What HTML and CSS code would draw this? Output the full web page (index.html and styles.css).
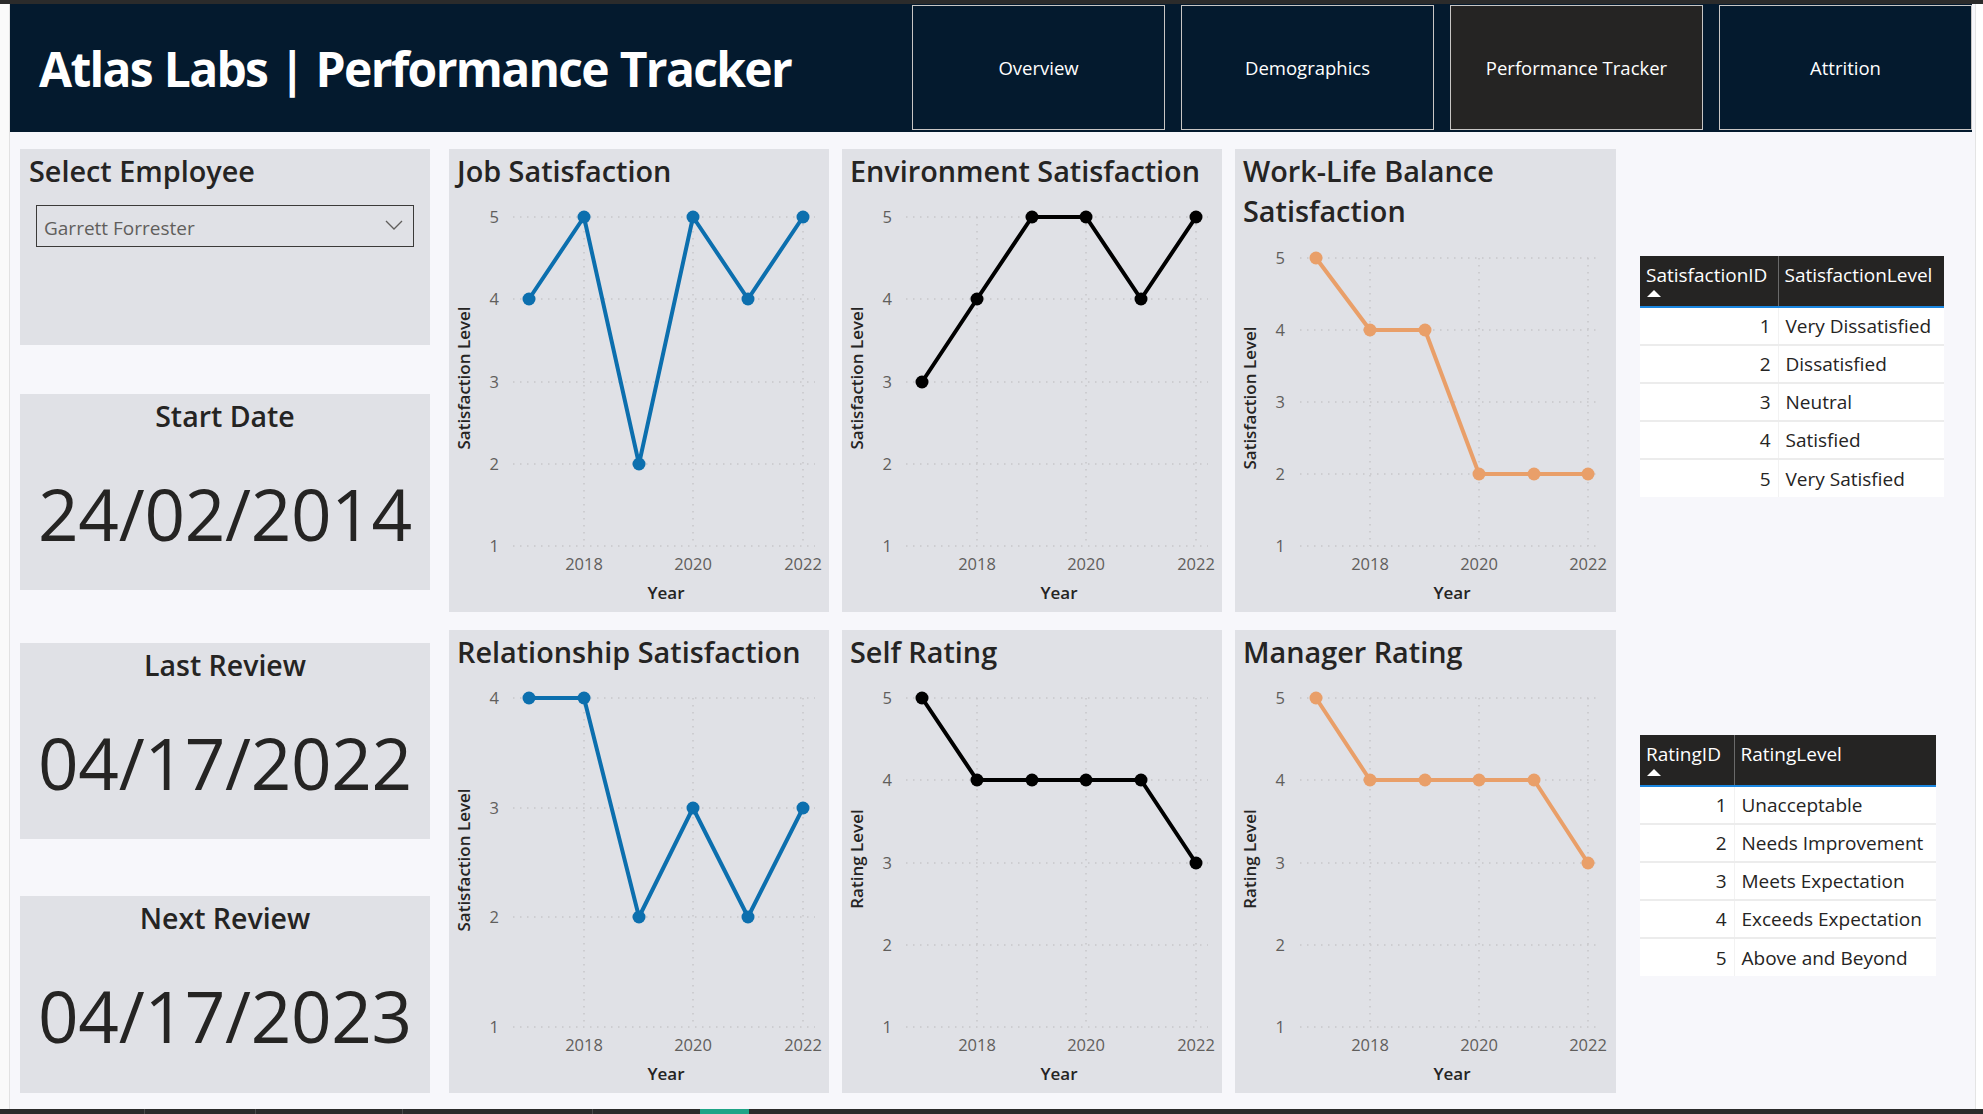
FILE: index.html
```html
<!DOCTYPE html>
<html lang="en">
<head>
<meta charset="utf-8">
<title>Atlas Labs | Performance Tracker</title>
<link rel="stylesheet" href="styles.css">
</head>
<body>
<div class="app">
  <div class="topbar"></div>
  <div class="main">
    <div class="edge-left"></div>
    <div class="canvas">
      <header class="header">
        <h1 class="brand">Atlas Labs | Performance Tracker</h1>
        <nav class="nav">
          <a class="nav-btn">Overview</a>
          <a class="nav-btn">Demographics</a>
          <a class="nav-btn active">Performance Tracker</a>
          <a class="nav-btn">Attrition</a>
        </nav>
      </header>

      <div class="content">
        <div class="left-col">
          <section class="card select-card">
            <h2 class="card-title">Select Employee</h2>
            <div class="dropdown">
              <span class="dropdown-text">Garrett Forrester</span>
              <svg class="chevron" width="18" height="10" viewBox="0 0 18 10"><polyline points="1,1 9,9 17,1" fill="none" stroke="#605e5c" stroke-width="1.3"/></svg>
            </div>
          </section>
          <section class="card kpi kpi-start">
            <div class="kpi-label">Start Date</div>
            <div class="kpi-value">24/02/2014</div>
          </section>
          <section class="card kpi kpi-last">
            <div class="kpi-label">Last Review</div>
            <div class="kpi-value">04/17/2022</div>
          </section>
          <section class="card kpi kpi-next">
            <div class="kpi-label">Next Review</div>
            <div class="kpi-value">04/17/2023</div>
          </section>
        </div>

        <div class="charts">
          <!-- Job Satisfaction -->
          <section class="card chart-card">
            <h2 class="card-title chart-title">Job Satisfaction</h2>
            <svg class="chart-svg" width="380" height="413" viewBox="0 0 380 413">
              <g class="grid">
                <line x1="64" y1="18" x2="366" y2="18"/><line x1="64" y1="100" x2="366" y2="100"/><line x1="64" y1="183" x2="366" y2="183"/><line x1="64" y1="265" x2="366" y2="265"/><line x1="64" y1="347" x2="366" y2="347"/>
                <line x1="135" y1="18" x2="135" y2="347"/><line x1="244" y1="18" x2="244" y2="347"/><line x1="354" y1="18" x2="354" y2="347"/>
              </g>
              <g class="tick">
                <text x="50" y="24" text-anchor="end">5</text><text x="50" y="106" text-anchor="end">4</text><text x="50" y="189" text-anchor="end">3</text><text x="50" y="271" text-anchor="end">2</text><text x="50" y="353" text-anchor="end">1</text>
                <text x="135" y="371" text-anchor="middle">2018</text><text x="244" y="371" text-anchor="middle">2020</text><text x="354" y="371" text-anchor="middle">2022</text>
              </g>
              <text class="axis-title" x="217" y="400" text-anchor="middle">Year</text>
              <text class="axis-title" transform="translate(21 179) rotate(-90)" text-anchor="middle">Satisfaction Level</text>
              <g class="series s-blue">
                <polyline points="80,100 135,18 190,265 244,18 299,100 354,18"/>
                <circle cx="80" cy="100" r="6.5"/><circle cx="135" cy="18" r="6.5"/><circle cx="190" cy="265" r="6.5"/><circle cx="244" cy="18" r="6.5"/><circle cx="299" cy="100" r="6.5"/><circle cx="354" cy="18" r="6.5"/>
              </g>
            </svg>
          </section>

          <!-- Environment Satisfaction -->
          <section class="card chart-card">
            <h2 class="card-title chart-title">Environment Satisfaction</h2>
            <svg class="chart-svg" width="380" height="413" viewBox="0 0 380 413">
              <g class="grid">
                <line x1="64" y1="18" x2="366" y2="18"/><line x1="64" y1="100" x2="366" y2="100"/><line x1="64" y1="183" x2="366" y2="183"/><line x1="64" y1="265" x2="366" y2="265"/><line x1="64" y1="347" x2="366" y2="347"/>
                <line x1="135" y1="18" x2="135" y2="347"/><line x1="244" y1="18" x2="244" y2="347"/><line x1="354" y1="18" x2="354" y2="347"/>
              </g>
              <g class="tick">
                <text x="50" y="24" text-anchor="end">5</text><text x="50" y="106" text-anchor="end">4</text><text x="50" y="189" text-anchor="end">3</text><text x="50" y="271" text-anchor="end">2</text><text x="50" y="353" text-anchor="end">1</text>
                <text x="135" y="371" text-anchor="middle">2018</text><text x="244" y="371" text-anchor="middle">2020</text><text x="354" y="371" text-anchor="middle">2022</text>
              </g>
              <text class="axis-title" x="217" y="400" text-anchor="middle">Year</text>
              <text class="axis-title" transform="translate(21 179) rotate(-90)" text-anchor="middle">Satisfaction Level</text>
              <g class="series s-black">
                <polyline points="80,183 135,100 190,18 244,18 299,100 354,18"/>
                <circle cx="80" cy="183" r="6.5"/><circle cx="135" cy="100" r="6.5"/><circle cx="190" cy="18" r="6.5"/><circle cx="244" cy="18" r="6.5"/><circle cx="299" cy="100" r="6.5"/><circle cx="354" cy="18" r="6.5"/>
              </g>
            </svg>
          </section>

          <!-- Work-Life Balance Satisfaction -->
          <section class="card chart-card">
            <h2 class="card-title chart-title">Work-Life Balance<br>Satisfaction</h2>
            <svg class="chart-svg" width="381" height="373" viewBox="0 0 381 373">
              <g class="grid">
                <line x1="65" y1="19" x2="365" y2="19"/><line x1="65" y1="91" x2="365" y2="91"/><line x1="65" y1="163" x2="365" y2="163"/><line x1="65" y1="235" x2="365" y2="235"/><line x1="65" y1="307" x2="365" y2="307"/>
                <line x1="135" y1="19" x2="135" y2="307"/><line x1="244" y1="19" x2="244" y2="307"/><line x1="353" y1="19" x2="353" y2="307"/>
              </g>
              <g class="tick">
                <text x="50" y="25" text-anchor="end">5</text><text x="50" y="97" text-anchor="end">4</text><text x="50" y="169" text-anchor="end">3</text><text x="50" y="241" text-anchor="end">2</text><text x="50" y="313" text-anchor="end">1</text>
                <text x="135" y="331" text-anchor="middle">2018</text><text x="244" y="331" text-anchor="middle">2020</text><text x="353" y="331" text-anchor="middle">2022</text>
              </g>
              <text class="axis-title" x="217" y="360" text-anchor="middle">Year</text>
              <text class="axis-title" transform="translate(21 159) rotate(-90)" text-anchor="middle">Satisfaction Level</text>
              <g class="series s-orange">
                <polyline points="81,19 135,91 190,91 244,235 299,235 353,235"/>
                <circle cx="81" cy="19" r="6.5"/><circle cx="135" cy="91" r="6.5"/><circle cx="190" cy="91" r="6.5"/><circle cx="244" cy="235" r="6.5"/><circle cx="299" cy="235" r="6.5"/><circle cx="353" cy="235" r="6.5"/>
              </g>
            </svg>
          </section>

          <!-- Relationship Satisfaction -->
          <section class="card chart-card">
            <h2 class="card-title chart-title">Relationship Satisfaction</h2>
            <svg class="chart-svg" width="380" height="413" viewBox="0 0 380 413">
              <g class="grid">
                <line x1="64" y1="18" x2="366" y2="18"/><line x1="64" y1="128" x2="366" y2="128"/><line x1="64" y1="237" x2="366" y2="237"/><line x1="64" y1="347" x2="366" y2="347"/>
                <line x1="135" y1="18" x2="135" y2="347"/><line x1="244" y1="18" x2="244" y2="347"/><line x1="354" y1="18" x2="354" y2="347"/>
              </g>
              <g class="tick">
                <text x="50" y="24" text-anchor="end">4</text><text x="50" y="134" text-anchor="end">3</text><text x="50" y="243" text-anchor="end">2</text><text x="50" y="353" text-anchor="end">1</text>
                <text x="135" y="371" text-anchor="middle">2018</text><text x="244" y="371" text-anchor="middle">2020</text><text x="354" y="371" text-anchor="middle">2022</text>
              </g>
              <text class="axis-title" x="217" y="400" text-anchor="middle">Year</text>
              <text class="axis-title" transform="translate(21 180) rotate(-90)" text-anchor="middle">Satisfaction Level</text>
              <g class="series s-blue">
                <polyline points="80,18 135,18 190,237 244,128 299,237 354,128"/>
                <circle cx="80" cy="18" r="6.5"/><circle cx="135" cy="18" r="6.5"/><circle cx="190" cy="237" r="6.5"/><circle cx="244" cy="128" r="6.5"/><circle cx="299" cy="237" r="6.5"/><circle cx="354" cy="128" r="6.5"/>
              </g>
            </svg>
          </section>

          <!-- Self Rating -->
          <section class="card chart-card">
            <h2 class="card-title chart-title">Self Rating</h2>
            <svg class="chart-svg" width="380" height="413" viewBox="0 0 380 413">
              <g class="grid">
                <line x1="64" y1="18" x2="366" y2="18"/><line x1="64" y1="100" x2="366" y2="100"/><line x1="64" y1="183" x2="366" y2="183"/><line x1="64" y1="265" x2="366" y2="265"/><line x1="64" y1="347" x2="366" y2="347"/>
                <line x1="135" y1="18" x2="135" y2="347"/><line x1="244" y1="18" x2="244" y2="347"/><line x1="354" y1="18" x2="354" y2="347"/>
              </g>
              <g class="tick">
                <text x="50" y="24" text-anchor="end">5</text><text x="50" y="106" text-anchor="end">4</text><text x="50" y="189" text-anchor="end">3</text><text x="50" y="271" text-anchor="end">2</text><text x="50" y="353" text-anchor="end">1</text>
                <text x="135" y="371" text-anchor="middle">2018</text><text x="244" y="371" text-anchor="middle">2020</text><text x="354" y="371" text-anchor="middle">2022</text>
              </g>
              <text class="axis-title" x="217" y="400" text-anchor="middle">Year</text>
              <text class="axis-title" transform="translate(21 179) rotate(-90)" text-anchor="middle">Rating Level</text>
              <g class="series s-black">
                <polyline points="80,18 135,100 190,100 244,100 299,100 354,183"/>
                <circle cx="80" cy="18" r="6.5"/><circle cx="135" cy="100" r="6.5"/><circle cx="190" cy="100" r="6.5"/><circle cx="244" cy="100" r="6.5"/><circle cx="299" cy="100" r="6.5"/><circle cx="354" cy="183" r="6.5"/>
              </g>
            </svg>
          </section>

          <!-- Manager Rating -->
          <section class="card chart-card">
            <h2 class="card-title chart-title">Manager Rating</h2>
            <svg class="chart-svg" width="381" height="413" viewBox="0 0 381 413">
              <g class="grid">
                <line x1="65" y1="18" x2="365" y2="18"/><line x1="65" y1="100" x2="365" y2="100"/><line x1="65" y1="183" x2="365" y2="183"/><line x1="65" y1="265" x2="365" y2="265"/><line x1="65" y1="347" x2="365" y2="347"/>
                <line x1="135" y1="18" x2="135" y2="347"/><line x1="244" y1="18" x2="244" y2="347"/><line x1="353" y1="18" x2="353" y2="347"/>
              </g>
              <g class="tick">
                <text x="50" y="24" text-anchor="end">5</text><text x="50" y="106" text-anchor="end">4</text><text x="50" y="189" text-anchor="end">3</text><text x="50" y="271" text-anchor="end">2</text><text x="50" y="353" text-anchor="end">1</text>
                <text x="135" y="371" text-anchor="middle">2018</text><text x="244" y="371" text-anchor="middle">2020</text><text x="353" y="371" text-anchor="middle">2022</text>
              </g>
              <text class="axis-title" x="217" y="400" text-anchor="middle">Year</text>
              <text class="axis-title" transform="translate(21 179) rotate(-90)" text-anchor="middle">Rating Level</text>
              <g class="series s-orange">
                <polyline points="81,18 135,100 190,100 244,100 299,100 353,183"/>
                <circle cx="81" cy="18" r="6.5"/><circle cx="135" cy="100" r="6.5"/><circle cx="190" cy="100" r="6.5"/><circle cx="244" cy="100" r="6.5"/><circle cx="299" cy="100" r="6.5"/><circle cx="353" cy="183" r="6.5"/>
              </g>
            </svg>
          </section>
        </div>

        <div class="tables">
          <table class="ref-table t-sat">
            <colgroup><col class="c-id"><col class="c-level"></colgroup>
            <thead>
              <tr><th>SatisfactionID<span class="sort"></span></th><th>SatisfactionLevel</th></tr>
            </thead>
            <tbody>
              <tr><td class="id">1</td><td>Very Dissatisfied</td></tr>
              <tr><td class="id">2</td><td>Dissatisfied</td></tr>
              <tr><td class="id">3</td><td>Neutral</td></tr>
              <tr><td class="id">4</td><td>Satisfied</td></tr>
              <tr><td class="id">5</td><td>Very Satisfied</td></tr>
            </tbody>
          </table>

          <table class="ref-table t-rating">
            <colgroup><col class="c-id"><col class="c-level"></colgroup>
            <thead>
              <tr><th>RatingID<span class="sort"></span></th><th>RatingLevel</th></tr>
            </thead>
            <tbody>
              <tr><td class="id">1</td><td>Unacceptable</td></tr>
              <tr><td class="id">2</td><td>Needs Improvement</td></tr>
              <tr><td class="id">3</td><td>Meets Expectation</td></tr>
              <tr><td class="id">4</td><td>Exceeds Expectation</td></tr>
              <tr><td class="id">5</td><td>Above and Beyond</td></tr>
            </tbody>
          </table>
        </div>
      </div>
    </div>
    <div class="edge-right"></div>
  </div>
  <div class="bottombar">
    <span class="seg seg-1"></span><span class="seg seg-2"></span><span class="seg seg-3"></span><span class="seg seg-4"></span><span class="seg seg-5"></span><span class="seg seg-active"></span>
  </div>
</div>
</body>
</html>
```

FILE: styles.css
```css
* { box-sizing: border-box; }
html, body { margin: 0; padding: 0; }
body {
  width: 1983px;
  height: 1114px;
  overflow: hidden;
  background: #ffffff;
  font-family: "Segoe UI", "Open Sans", "Noto Sans", sans-serif;
  color: #252423;
}

.app { display: flex; flex-direction: column; height: 1114px; }
.topbar { height: 4px; flex: none; background: #2b2b2b; }
.main { flex: 1; display: flex; min-height: 0; }
.edge-left { width: 10px; flex: none; background: #fafafa; border-right: 1px solid #e2e2e2; }
.canvas { width: 1965px; flex: none; background: #f7f7fb; display: flex; flex-direction: column; }
.edge-right { flex: 1; background: #ffffff; border-left: 1px solid #e4e4e4; }

.bottombar { height: 5px; flex: none; display: flex; background: #2b2b2b; }
.seg { height: 5px; border-right: 1px solid #4a4a4a; }
.seg-1 { width: 145px; }
.seg-2 { width: 111px; }
.seg-3 { width: 147px; }
.seg-4 { width: 190px; }
.seg-5 { width: 107px; border-right: none; }
.seg-active { width: 49px; background: #20a487; border-right: none; }

/* Header */
.header {
  height: 128px;
  flex: none;
  margin-right: 3px;
  background: #041a2e;
  display: flex;
  align-items: flex-start;
}
.brand {
  margin: 0;
  padding: 4px 0 0 29px;
  font-size: 48px;
  font-weight: 700;
  line-height: 122px;
  color: #ffffff;
  white-space: nowrap;
  letter-spacing: -1.7px;
  word-spacing: 1px;
}
.nav { margin-left: auto; display: flex; gap: 16px; padding-top: 1px; }
.nav-btn {
  width: 253px;
  height: 125px;
  display: flex;
  align-items: center;
  justify-content: center;
  border: 1px solid #c8c6c4;
  background: #041a2e;
  color: #ffffff;
  font-size: 18.5px;
  text-decoration: none;
}
.nav-btn.active { background: #252423; }

/* Content */
.content { flex: 1; display: flex; align-items: flex-start; padding: 17px 0 0 10px; }
.card { background: #e0e1e6; }

.left-col { width: 410px; flex: none; display: flex; flex-direction: column; margin-right: 19px; }
.card-title { margin: 0; font-size: 28.8px; font-weight: 600; line-height: 40px; color: #252423; }

.select-card { height: 196px; padding: 2px 0 0 9px; }
.dropdown {
  margin: 14px 0 0 7px;
  width: 378px;
  height: 42px;
  border: 1px solid #3b3a39;
  display: flex;
  align-items: center;
  justify-content: space-between;
  padding: 3px 10px 0 7px;
}
.dropdown-text { font-size: 19px; color: #605e5c; }
.chevron { display: block; margin-top: -6px; }

.kpi { height: 196px; padding-top: 2px; text-align: center; }
.kpi-label { font-size: 28.5px; font-weight: 600; line-height: 40px; }
.kpi-value { font-size: 71px; font-weight: 500; line-height: 90px; margin-top: 33px; letter-spacing: -0.3px; }
.kpi-start { margin-top: 49px; }
.kpi-last { margin-top: 53px; }
.kpi-next { margin-top: 57px; height: 197px; }

/* Charts */
.charts {
  flex: none;
  display: grid;
  grid-template-columns: 380px 380px 381px;
  grid-template-rows: 463px 463px;
  column-gap: 13px;
  row-gap: 18px;
}
.chart-card { display: flex; flex-direction: column; padding-top: 2px; }
.chart-title { padding-left: 8px; margin-bottom: 8px; white-space: nowrap; }
.chart-svg { display: block; flex: none; overflow: visible; }
.grid line { stroke: #c6c6ca; stroke-width: 1.5; stroke-dasharray: 1.5 5.5; }
.tick text { font-size: 16.5px; fill: #605e5c; }
.axis-title { font-size: 17px; font-weight: 600; fill: #252423; }
.series polyline { fill: none; stroke-width: 4; stroke-linejoin: round; stroke-linecap: round; }
.s-blue polyline { stroke: #0c6fae; }
.s-blue circle { fill: #0c6fae; }
.s-black polyline { stroke: #000000; }
.s-black circle { fill: #000000; }
.s-orange polyline { stroke: #e99f69; }
.s-orange circle { fill: #e99f69; }

/* Tables */
.tables { flex: none; display: flex; flex-direction: column; margin-left: 24px; }
.ref-table { border-collapse: collapse; table-layout: fixed; font-size: 19px; }
.t-sat { width: 304px; margin-top: 107px; }
.t-rating { width: 296px; margin-top: 238px; }
.t-sat .c-id { width: 138px; }
.t-sat .c-level { width: 166px; }
.t-rating .c-id { width: 94px; }
.t-rating .c-level { width: 202px; }
.ref-table th {
  height: 51px;
  padding: 8px 2px 0 6px;
  background: #252423;
  color: #ffffff;
  font-weight: 400;
  text-align: left;
  vertical-align: top;
  line-height: 22px;
  white-space: nowrap;
  overflow: hidden;
  border-bottom: 2px solid #1a86e0;
}
.ref-table th + th { border-left: 1px solid #6a6a6a; }
.sort {
  display: block;
  width: 0;
  height: 0;
  margin: 4px 0 0 1px;
  border-left: 7px solid transparent;
  border-right: 7px solid transparent;
  border-bottom: 7px solid #ffffff;
}
.ref-table td {
  height: 38px;
  padding: 0 7px;
  background: #ffffff;
  border-top: 2px solid #ececec;
  white-space: nowrap;
  line-height: 22px;
}
.ref-table tbody tr:first-child td { border-top: none; }
.ref-table td + td { border-left: 1px solid #f2f2f2; }
.ref-table td.id { text-align: right; }
```
